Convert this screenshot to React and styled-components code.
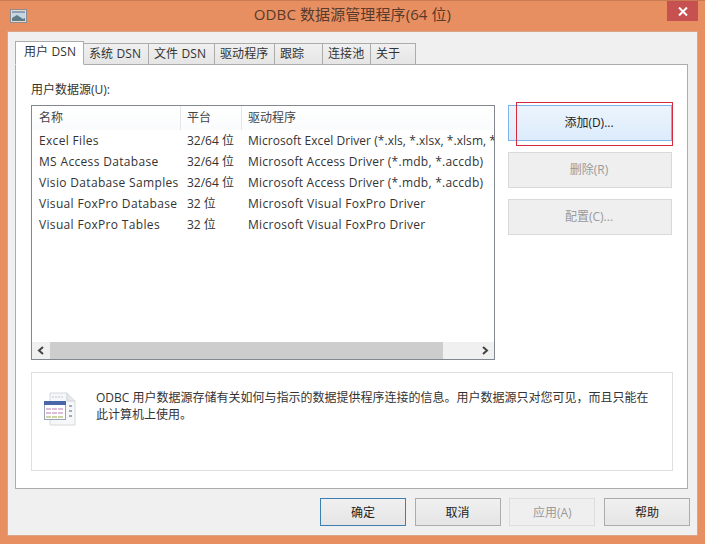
import React from "react";
import styled, { createGlobalStyle } from "styled-components";

const Global = createGlobalStyle`
  html, body { margin: 0; padding: 0; background: #E88F62; }
  * { box-sizing: border-box; }
  #root { width: 705px; height: 544px; overflow: hidden; }
`;

const Window = styled.div`
  position: relative;
  width: 705px;
  height: 544px;
  background: #E88F62;
  border-top: 1px solid #C97A50;
  padding: 0 7px 8px 7px;
  display: flex;
  flex-direction: column;
  font-family: "Open Sans", "Noto Sans CJK SC", sans-serif;
  font-size: 12px;
  color: #222;
`;

const TitleBar = styled.div`
  height: 30px;
  flex: none;
  display: flex;
  align-items: flex-start;
  position: relative;
`;

const AppIcon = styled.svg`
  width: 17px;
  height: 16px;
  margin: 7px 0 0 3px;
  flex: none;
`;

const Title = styled.div`
  position: absolute;
  left: 0;
  right: 0;
  top: 1px;
  text-align: center;
  font-size: 15px;
  line-height: 24px;
  letter-spacing: 0.1px;
  color: #5a3a2a;
`;

const CloseButton = styled.div`
  position: absolute;
  right: 0;
  top: 0;
  width: 31px;
  height: 20px;
  background: #C75050;
  display: flex;
  align-items: center;
  justify-content: center;
`;

const Client = styled.div`
  flex: 1;
  background: #F0F0F0;
  border: 1px solid #D9A488;
  padding: 9px 7px 9px 7px;
  display: flex;
  flex-direction: column;
`;

const TabRow = styled.div`
  display: flex;
  align-items: flex-end;
  height: 24px;
  flex: none;
  position: relative;
  z-index: 1;
  margin-bottom: -1px;
`;

const Tab = styled.div`
  width: ${(p) => p.$w}px;
  height: ${(p) => (p.$active ? 24 : 22)}px;
  background: ${(p) => (p.$active ? "#fff" : "linear-gradient(#F0F0F0, #E5E5E5)")};
  border: 1px solid #ACACAC;
  border-left-width: ${(p) => (p.$first ? 1 : 0)}px;
  border-bottom: ${(p) => (p.$active ? "1px solid #fff" : "1px solid #ACACAC")};
  padding: ${(p) => (p.$active ? "1px 0 0 8px" : "1px 0 0 5px")};
  line-height: 17px;
  letter-spacing: 0.1px;
  white-space: nowrap;
  color: #333;
`;

const Panel = styled.div`
  width: 673px;
  height: 425px;
  background: #fff;
  border: 1px solid #ACACAC;
  padding: 16px 15px 17px 15px;
  display: flex;
  flex-direction: column;
`;

const Upper = styled.div`
  display: flex;
  gap: 13px;
`;

const ListColumn = styled.div`
  width: 464px;
  flex: none;
`;

const FieldLabel = styled.div`
  line-height: 17px;
  height: 24px;
  color: #333;
`;

const List = styled.div`
  height: 255px;
  border: 1px solid #828790;
  display: flex;
  flex-direction: column;
  overflow: hidden;
`;

const HeaderRow = styled.div`
  display: grid;
  grid-template-columns: 149px 61px 1fr;
  height: 24px;
  flex: none;
  background: linear-gradient(#fff, #FAFBFD);
`;

const HeaderCell = styled.div`
  padding: 3px 0 0 6px;
  line-height: 17px;
  color: #444;
  border-right: 1px solid ${(p) => (p.$last ? "transparent" : "#E5E5E5")};
  &:first-child { padding-left: 7px; }
`;

const Rows = styled.div`
  flex: 1;
  overflow: hidden;
`;

const Row = styled.div`
  display: grid;
  grid-template-columns: 149px 61px 1fr;
  height: 21px;
  line-height: 21px;
  white-space: nowrap;
  color: #333;
`;

const NameCell = styled.div`
  padding-left: 7px;
  overflow: hidden;
  letter-spacing: 0.33px;
`;

const PlatformCell = styled.div`
  padding-left: 6px;
  overflow: hidden;
`;

const DriverCell = styled.div`
  padding-left: 6px;
  overflow: hidden;
  letter-spacing: ${(p) => p.$spacing}px;
`;

const Scrollbar = styled.div`
  height: 17px;
  flex: none;
  background: #F0F0F0;
  display: flex;
  align-items: stretch;
`;

const ScrollArrow = styled.div`
  width: 18px;
  flex: none;
  display: flex;
  align-items: center;
  justify-content: center;
`;

const ScrollTrack = styled.div`
  flex: 1;
`;

const ScrollThumb = styled.div`
  width: 393px;
  height: 100%;
  background: #CDCDCD;
`;

const ButtonColumn = styled.div`
  width: 164px;
  flex: none;
  padding-top: 24px;
  display: flex;
  flex-direction: column;
  gap: 11px;
`;

const SideButton = styled.div`
  height: 36px;
  display: flex;
  align-items: center;
  justify-content: center;
  padding: 0 2px 2px 0;
  border: 1px solid ${(p) => (p.$primary ? "#7EB4EA" : "#D9D9D9")};
  background: ${(p) => (p.$primary ? "linear-gradient(#ECF4FC, #DCECFC)" : "#EFEFEF")};
  color: ${(p) => (p.$primary ? "#222" : "#9A9A9A")};
`;

const InfoBox = styled.div`
  margin-top: 12px;
  height: 99px;
  width: 642px;
  border: 1px solid #DFDFDF;
  display: flex;
  padding: 16px 0 0 12px;
`;

const InfoIcon = styled.svg`
  width: 33px;
  height: 36px;
  flex: none;
  margin-top: 3px;
`;

const InfoText = styled.div`
  margin-left: 19px;
  width: 570px;
  line-height: 17px;
  color: #333;
`;

const Footer = styled.div`
  display: flex;
  justify-content: flex-end;
  gap: 8.7px;
  padding: 9px 0 0 0;
`;

const DialogButton = styled.div`
  width: 86px;
  height: 28px;
  display: flex;
  align-items: center;
  justify-content: center;
  border: 1px solid ${(p) => (p.$default ? "#3C7FB1" : p.$disabled ? "#DDDDDD" : "#ACACAC")};
  background: ${(p) => (p.$disabled ? "#EFEFEF" : "linear-gradient(#F0F0F0, #E5E5E5)")};
  color: ${(p) => (p.$disabled ? "#9A9A9A" : "#222")};
`;

const Highlight = styled.div`
  position: absolute;
  left: 516px;
  top: 101px;
  width: 157px;
  height: 44px;
  border: 1px solid #D8283C;
  pointer-events: none;
`;

const tabs = [
  ["用户 DSN", 69],
  ["系统 DSN", 65],
  ["文件 DSN", 66],
  ["驱动程序", 60],
  ["跟踪", 48],
  ["连接池", 48],
  ["关于", 45],
];

const rows = [
  ["Excel Files", "32/64 位", "Microsoft Excel Driver (*.xls, *.xlsx, *.xlsm, *.xlsb)", 0.05],
  ["MS Access Database", "32/64 位", "Microsoft Access Driver (*.mdb, *.accdb)", 0.25],
  ["Visio Database Samples", "32/64 位", "Microsoft Access Driver (*.mdb, *.accdb)", 0.25],
  ["Visual FoxPro Database", "32 位", "Microsoft Visual FoxPro Driver", 0.3],
  ["Visual FoxPro Tables", "32 位", "Microsoft Visual FoxPro Driver", 0.3],
];

export default function App() {
  return (
    <Window>
      <Global />
      <TitleBar>
        <AppIcon viewBox="0 0 17 16">
          <rect x="0.5" y="1.5" width="16" height="13" fill="#E4D8D2" stroke="#8F8A8C" />
          <rect x="2" y="3" width="13" height="2" fill="#8FA0B4" />
          <rect x="2" y="5" width="13" height="8" fill="#C4D6E2" />
          <path d="M2 10 L7 7 L13 11 L15 10 L15 13 L2 13 Z" fill="#5F7C86" />
        </AppIcon>
        <Title>ODBC 数据源管理程序(64 位)</Title>
        <CloseButton>
          <svg width="10" height="9" viewBox="0 0 10 9">
            <path d="M1 0.5 L9 8.5 M9 0.5 L1 8.5" stroke="#fff" strokeWidth="2" />
          </svg>
        </CloseButton>
      </TitleBar>
      <Client>
        <TabRow>
          {tabs.map(([t, w], i) => (
            <Tab key={t} $w={w} $active={i === 0} $first={i === 0}>
              {t}
            </Tab>
          ))}
        </TabRow>
        <Panel>
          <Upper>
            <ListColumn>
              <FieldLabel>用户数据源(U):</FieldLabel>
              <List>
                <HeaderRow>
                  <HeaderCell>名称</HeaderCell>
                  <HeaderCell>平台</HeaderCell>
                  <HeaderCell $last>驱动程序</HeaderCell>
                </HeaderRow>
                <Rows>
                  {rows.map((r) => (
                    <Row key={r[0]}>
                      <NameCell>{r[0]}</NameCell>
                      <PlatformCell>{r[1]}</PlatformCell>
                      <DriverCell $spacing={r[3]}>{r[2]}</DriverCell>
                    </Row>
                  ))}
                </Rows>
                <Scrollbar>
                  <ScrollArrow>
                    <svg width="8" height="9" viewBox="0 0 8 9">
                      <path d="M6 1 L2 4.5 L6 8" fill="none" stroke="#444" strokeWidth="2" />
                    </svg>
                  </ScrollArrow>
                  <ScrollTrack>
                    <ScrollThumb />
                  </ScrollTrack>
                  <ScrollArrow>
                    <svg width="8" height="9" viewBox="0 0 8 9">
                      <path d="M2 1 L6 4.5 L2 8" fill="none" stroke="#444" strokeWidth="2" />
                    </svg>
                  </ScrollArrow>
                </Scrollbar>
              </List>
            </ListColumn>
            <ButtonColumn>
              <SideButton $primary>添加(D)...</SideButton>
              <SideButton>删除(R)</SideButton>
              <SideButton>配置(C)...</SideButton>
            </ButtonColumn>
          </Upper>
          <InfoBox>
            <InfoIcon viewBox="0 0 33 36">
              <path d="M6 1 H23 L31 9 V33 H6 Z" fill="#F6F7F8" stroke="#D6D8DC" />
              <path d="M23 1 V9 H31" fill="#E6E8EC" stroke="#CDD0D5" />
              <path d="M25 14 h3 M25 19 h3 M25 24 h3" stroke="#A4ABB5" strokeWidth="2" />
              <path d="M8 5 h12" stroke="#C4C8CE" strokeWidth="1" strokeDasharray="2 1" />
              <rect x="0.5" y="9.5" width="21" height="18" fill="#fff" stroke="#9AA3B5" />
              <rect x="0" y="9" width="22" height="4" fill="#4A66A8" />
              <path d="M2 17 h18 M2 21 h18" stroke="#D3A8CF" strokeWidth="1.5" strokeDasharray="5 1" />
              <path d="M2 25 h18" stroke="#BCC88A" strokeWidth="1.5" strokeDasharray="5 1" />
            </InfoIcon>
            <InfoText>
              ODBC 用户数据源存储有关如何与指示的数据提供程序连接的信息。用户数据源只对您可见，而且只能在
              <br />
              此计算机上使用。
            </InfoText>
          </InfoBox>
        </Panel>
        <Footer>
          <DialogButton $default>确定</DialogButton>
          <DialogButton>取消</DialogButton>
          <DialogButton $disabled>应用(A)</DialogButton>
          <DialogButton>帮助</DialogButton>
        </Footer>
      </Client>
      <Highlight />
    </Window>
  );
}
